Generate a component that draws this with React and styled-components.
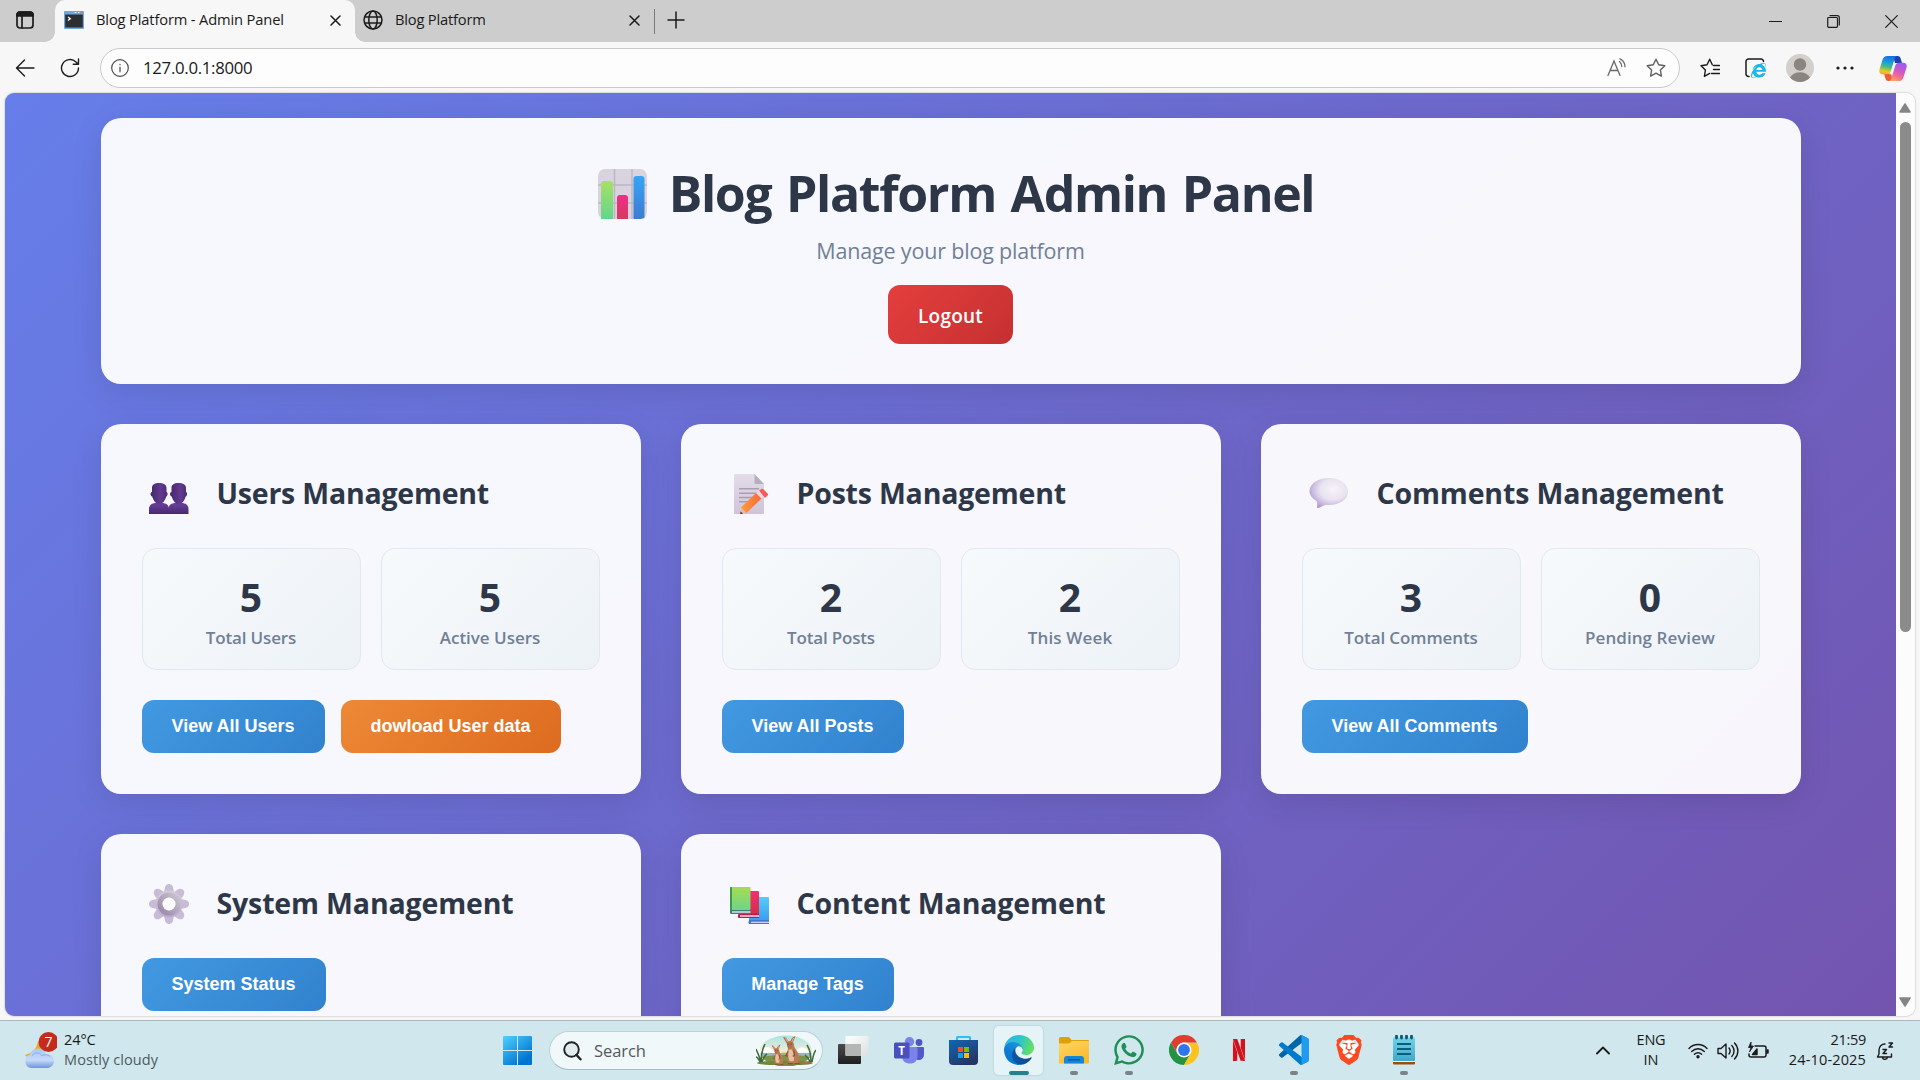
import React from "react";
import styled, { createGlobalStyle, css } from "styled-components";
import { FaWhatsapp, FaInternetExplorer } from "react-icons/fa";
import { SiBrave, SiNetflix } from "react-icons/si";

const Global = createGlobalStyle`
  * { box-sizing: border-box; }
  body { margin: 0; overflow: hidden; background: #f7f7f7; font-family: "Open Sans", "Noto Sans", sans-serif; }
  svg { display: block; flex: none; }
`;

const Screen = styled.div`
  width: 1920px;
  height: 1080px;
  display: flex;
  flex-direction: column;
  overflow: hidden;
  background: #f7f7f7;
`;

const Label = styled.span`
  white-space: nowrap;
  padding-bottom: 2px;
  font-size: ${(p) => p.$size || 15}px;
  font-weight: ${(p) => p.$weight || 400};
  letter-spacing: ${(p) => p.$ls || 0}px;
  word-spacing: ${(p) => p.$ws || 0}px;
  color: ${(p) => p.$color || "#1a1a1a"};
`;

/* ---------- browser chrome ---------- */

const TabStrip = styled.div`
  height: 42px;
  flex: none;
  display: flex;
  align-items: stretch;
  background: #cdcdcd;
`;

const StripButton = styled.div`
  width: ${(p) => p.$w}px;
  margin-right: ${(p) => p.$gap || 0}px;
  display: flex;
  align-items: center;
  justify-content: center;
  padding-bottom: 2px;
`;

const Tab = styled.div`
  position: relative;
  width: ${(p) => p.$w}px;
  display: flex;
  align-items: center;
  padding: 0 14px 2px ${(p) => (p.$active ? 9 : 8)}px;
  gap: 12px;
  border-radius: 10px 10px 0 0;
  ${(p) =>
    p.$active &&
    css`
      background: #f7f7f7;
      &::before,
      &::after {
        content: "";
        position: absolute;
        bottom: 0;
        width: 10px;
        height: 10px;
      }
      &::before {
        left: -10px;
        background: radial-gradient(circle at 0 0, transparent 9.5px, #f7f7f7 10px);
      }
      &::after {
        right: -10px;
        background: radial-gradient(circle at 100% 0, transparent 9.5px, #f7f7f7 10px);
      }
    `}
`;

const Grow = styled.div`
  flex: 1;
`;

const StripDivider = styled.div`
  width: 1px;
  height: 25px;
  margin: 9px 12px 0 0;
  background: #7a7a7a;
`;

const WindowButtons = styled.div`
  display: flex;
  align-items: center;
  gap: 45px;
  padding-right: 22px;
`;

const Toolbar = styled.div`
  height: 51px;
  flex: none;
  display: flex;
  align-items: center;
  padding: 1px 0 0 15px;
`;

const NavIcons = styled.div`
  display: flex;
  gap: 25px;
  width: 85px;
`;

const AddressBar = styled.div`
  width: 1580px;
  height: 40px;
  display: flex;
  align-items: center;
  gap: 14px;
  padding: 0 13px 0 10px;
  border: 1px solid #cacaca;
  border-radius: 20px;
  background: #fdfdfd;
`;

const AddressActions = styled.div`
  display: flex;
  gap: 19px;
`;

const ToolbarActions = styled.div`
  display: grid;
  grid-template-columns: repeat(4, 45px) 51px;
  align-items: center;
  justify-items: center;
  padding-left: 7.5px;
`;

const BrowserBody = styled.div`
  height: 928px;
  flex: none;
  padding: 0 5px 4px 5px;
  border-bottom: 1px solid #a9b8bc;
  background: #f7f7f7;
`;

const Frame = styled.div`
  display: flex;
  height: 923px;
  border-radius: 9px;
  overflow: hidden;
  box-shadow: 0 0 2px rgba(0, 0, 0, 0.35);
`;

/* ---------- page ---------- */

const Viewport = styled.div`
  flex: 1;
  overflow: hidden;
`;

const Page = styled.div`
  height: 1577px;
  padding-top: 25px;
  background: linear-gradient(135deg, #667eea 0%, #764ba2 100%);
`;

const Container = styled.div`
  width: 1700px;
  margin: 0 auto;
`;

const panel = css`
  background: rgba(255, 255, 255, 0.95);
  border-radius: 20px;
  box-shadow: 0 8px 32px rgba(0, 0, 0, 0.1);
`;

const Hero = styled.header`
  ${panel}
  height: 266px;
  margin-bottom: 40px;
  padding: 42px 40px 40px;
  display: flex;
  flex-direction: column;
  align-items: center;
`;

const HeroTitle = styled.h1`
  display: flex;
  align-items: center;
  gap: 21px;
  height: 68px;
  margin: 0;
  padding-left: 11px;
`;

const HeroSub = styled.p`
  margin: 7px 0 18px;
  height: 32px;
  display: flex;
  align-items: center;
`;

const button = css`
  display: inline-flex;
  align-items: center;
  justify-content: center;
  border: none;
  border-radius: 12px;
  color: #fff;
`;

const LogoutButton = styled.button`
  ${button}
  width: 125px;
  height: 59px;
  padding: 5px 0 0;
  font-family: inherit;
  background: linear-gradient(135deg, #e53e3e 0%, #c53030 100%);
`;

const Grid = styled.main`
  display: grid;
  grid-template-columns: repeat(3, 1fr);
  gap: 40px;
`;

const Card = styled.section`
  ${panel}
  height: 370px;
  padding: 41px;
`;

const CardTitle = styled.h2`
  display: flex;
  align-items: center;
  gap: 28px;
  height: 58px;
  margin: 0 0 25px;
  padding-left: 7px;
`;

const Stats = styled.div`
  display: grid;
  grid-template-columns: 1fr 1fr;
  gap: 20px;
  margin-bottom: 30px;
`;

const Stat = styled.div`
  height: 122px;
  display: flex;
  flex-direction: column;
  align-items: center;
  padding-top: 23px;
  border: 1px solid #e2e8f0;
  border-radius: 14px;
  background: linear-gradient(135deg, #f7fafc 0%, #edf2f7 100%);
`;

const StatNumber = styled.div`
  height: 50px;
  line-height: 50px;
  font-size: 39px;
  font-weight: 700;
  color: #2d3748;
`;

const StatLabel = styled.div`
  height: 30px;
  line-height: 30px;
  margin-top: 1px;
`;

const Actions = styled.div`
  display: flex;
  gap: 16px;
`;

const ActionButton = styled.button`
  ${button}
  width: ${(p) => p.$w}px;
  height: 53px;
  padding: 0;
  white-space: nowrap;
  font: 700 18px "Liberation Sans", Arial, sans-serif;
  background: ${(p) =>
    p.$tone === "orange"
      ? "linear-gradient(135deg, #ed8936 0%, #dd6b20 100%)"
      : "linear-gradient(135deg, #4299e1 0%, #3182ce 100%)"};
`;

const ScrollRail = styled.div`
  width: 19px;
  display: flex;
  flex-direction: column;
  align-items: center;
  padding: 10px 1px 9px 0;
  background: #fcfcfc;
`;

const ScrollThumb = styled.div`
  width: 11px;
  height: 510px;
  margin: 9px 0 auto;
  border-radius: 6px;
  background: #8b8b8b;
`;

/* ---------- taskbar ---------- */

const Taskbar = styled.footer`
  height: 59px;
  flex: none;
  display: flex;
  align-items: center;
  background: #cfe7ed;
`;

const Weather = styled.div`
  width: 486px;
  display: flex;
  align-items: center;
  gap: 7px;
  padding-left: 24px;
`;

const Stack = styled.div`
  display: flex;
  flex-direction: column;
  align-items: ${(p) => p.$align || "flex-start"};
  line-height: 18px;
`;

const SearchBox = styled.div`
  width: 274px;
  height: 39px;
  margin: 0 6px 0 0;
  display: flex;
  align-items: center;
  padding: 0 6px 0 13px;
  border: 1px solid #b9d3d9;
  border-bottom-color: #a3bcc3;
  border-radius: 20px;
  background: #f0f8fa;
`;

const SearchText = styled.div`
  flex: 1;
  padding: 0 0 0 12px;
`;

const AppSlot = styled.div`
  position: relative;
  width: ${(p) => p.$w || 49}px;
  height: 49px;
  margin-right: ${(p) => (p.$w ? 0 : 6)}px;
  display: flex;
  align-items: center;
  justify-content: center;
  padding-bottom: 1px;
  border-radius: 5px;
  ${(p) => p.$on && "background: #e6f3f7; box-shadow: 0 0 1px 1px rgba(150,180,190,.25);"}
  &::after {
    content: "";
    position: absolute;
    bottom: 0;
    width: ${(p) => (p.$on ? 20 : 8)}px;
    height: 4px;
    border-radius: 2px;
    background: ${(p) => (p.$on ? "#27808f" : p.$open ? "#778488" : "transparent")};
  }
`;

const BraveBadge = styled.div`
  background: radial-gradient(circle, #fff 9px, transparent 10px);
`;

const Tray = styled.div`
  margin-left: auto;
  display: flex;
  align-items: center;
  padding-right: 26px;
`;

const TrayStatus = styled.div`
  display: flex;
  align-items: center;
  gap: 8.5px;
  margin-left: 9px;
`;

const TrayCell = styled.div`
  display: flex;
  flex: none;
  justify-content: ${(p) => p.$justify || "center"};
  width: ${(p) => p.$w}px;
  margin-right: ${(p) => p.$gap || 0}px;
`;

/* ---------- chrome icons ---------- */

const Line = ({ w = 20, h, box, sw = 1.5, color = "#1b1b1b", children }) => (
  <svg width={w} height={h || w} viewBox={box || `0 0 ${w} ${h || w}`} fill="none" stroke={color} strokeWidth={sw} strokeLinecap="round" strokeLinejoin="round">
    {children}
  </svg>
);

const CloseX = () => (
  <Line w={11} sw={1.5}><path d="M1 1l9 9M10 1l-9 9" /></Line>
);

const SidebarIcon = () => (
  <Line w={18} sw={1.7}>
    <rect x="1" y="1" width="16" height="16" rx="3" />
    <path d="M1 3.5a2.5 2.5 0 0 1 2.5-2.5h11A2.5 2.5 0 0 1 17 3.500V5H1z" fill="#1b1b1b" />
    <path d="M6 5v12" />
  </Line>
);

const TerminalIcon = () => (
  <svg width="20" height="18" viewBox="0 0 20 18">
    <rect width="20" height="18" rx="1" fill="#6da7e0" />
    <path d="M10.500 1.500h2M14 1.500h1.500" stroke="#e8f2fb" />
    <path d="M16.500 1.500h2" stroke="#e06a5a" strokeWidth="1.400" />
    <rect x="1.200" y="3.500" width="17.600" height="13" fill="#2c2e31" />
    <path d="M4 6l2.300 1.700L4 9.500" stroke="#fff" strokeWidth="1.300" fill="none" />
  </svg>
);

const GlobeIcon = () => (
  <Line w={20} sw={1.5}>
    <circle cx="10" cy="10" r="9" />
    <ellipse cx="10" cy="10" rx="4.200" ry="9" />
    <path d="M2 7h16M2 13h16" />
  </Line>
);

const ReadAloud = () => (
  <svg width="20" height="20" viewBox="0 0 20 20" fill="none" stroke="#6a6a6a" strokeWidth="1.300" strokeLinecap="round">
    <path d="M1 17.500L7 3l6 14.500M3 12.500h8" />
    <path d="M12.500 3.500c1.500 1.200 2.200 2.900 2.300 5M13 .8c3.300 1.700 5 4.500 5 8" />
  </svg>
);

const starPath = "M10 1.200l2.700 5.600 6.100.9-4.400 4.300 1 6.100L10 15.200l-5.400 2.900 1-6.100L1.200 7.700l6.100-.9z";

const FavoritesIcon = () => (
  <Line sw={1.4}>
    <path d="M12.300 6.800L9.700 1.200 7 6.800l-6 .9L5.400 12l-1 6.300 5.300-2.900" />
    <path d="M13.500 7.500h6M13.500 11.500h6M11.500 15.500h8" />
  </Line>
);

const IeSlot = styled.div`
  position: relative;
  width: 20px;
  height: 20px;
`;
const IeBadge = styled.div`
  position: absolute;
  right: -1px;
  bottom: 0;
  background: #f7f7f7;
  border-radius: 8px;
`;

const CopilotIcon = () => (
  <svg width="28" height="27" viewBox="0 0 28 27">
    <defs>
      <linearGradient id="cpA" x1="0.500" y1="0" x2="0.300" y2="1">
        <stop offset="0" stopColor="#1a6fe0" /><stop offset=".35" stopColor="#1b9fdc" /><stop offset=".6" stopColor="#4cc07a" /><stop offset=".85" stopColor="#f2c61f" /><stop offset="1" stopColor="#f5a623" />
      </linearGradient>
      <linearGradient id="cpB" x1="0.700" y1="0" x2="0.300" y2="1">
        <stop offset="0" stopColor="#9a5cf2" /><stop offset=".45" stopColor="#d158c8" /><stop offset=".75" stopColor="#f6708a" /><stop offset="1" stopColor="#ffa45c" />
      </linearGradient>
    </defs>
    <path d="M14 1h4.600c1.500 0 2.400.8 2.900 2.200L23 8h-7z" fill="#1b3fb5" />
    <path d="M14 26H9.400c-1.500 0-2.400-.8-2.900-2.200L5 18.500h7z" fill="#ee5a3a" />
    <path d="M8.500 1H18c-1.300.4-2 1.500-2.500 3l-3.600 12c-.7 2.200-1.800 3.200-4 3.200H3.500C.9 19.200-.2 17.200.5 14.500L3.600 4.600C4.400 2.200 5.800 1 8.500 1z" fill="url(#cpA)" />
    <path d="M19.500 26H10c1.300-.4 2-1.500 2.500-3l3.600-12c.7-2.200 1.800-3.200 4-3.200h4.400c2.600 0 3.700 2 3 4.700l-3.100 9.900c-.8 2.400-2.200 3.600-4.900 3.600z" fill="url(#cpB)" />
    <path d="M18.700 7.900c-1.800.2-2.600 1.400-3.200 3.200L13 19.200H10c1.400-.5 2-1.600 2.500-3.200L15 7.900z" fill="#fdfaff" />
  </svg>
);

/* ---------- page pictograms ---------- */

const ChartEmoji = () => (
  <svg width="50" height="50" viewBox="0 0 50 50">
    <defs>
      <linearGradient id="chG" x2="0" y2="1"><stop stopColor="#a8e063" /><stop offset="1" stopColor="#62d68c" /></linearGradient>
      <linearGradient id="chB" x2="0" y2="1"><stop stopColor="#36a5f5" /><stop offset="1" stopColor="#3d7bd0" /></linearGradient>
      <linearGradient id="chR" x2="0" y2="1"><stop stopColor="#ee2f86" /><stop offset="1" stopColor="#d63a5f" /></linearGradient>
    </defs>
    <rect width="49" height="50" rx="7" fill="#d9d3df" />
    <path d="M16.500 0v50M34 0v50M0 16h49M0 34h49" stroke="#bcb6c4" strokeWidth="1.500" />
    <path d="M3 50V15c0-2 1-3 3-3h6c2 0 3 1 3 3v35H6z" fill="url(#chG)" />
    <path d="M19 50V29c0-2 1-3 3-3h5c2 0 3 1 3 3v21z" fill="url(#chR)" />
    <path d="M35.500 50V10c0-2 1-3 3-3h5c2 0 3 1 3 3v39l-4 1z" fill="url(#chB)" />
  </svg>
);

const UsersEmoji = () => (
  <svg width="40" height="40" viewBox="0 0 40 40">
    <defs>
      <linearGradient id="usA" x2="1" y2="0"><stop stopColor="#44276b" /><stop offset=".6" stopColor="#623a90" /><stop offset="1" stopColor="#4b2b73" /></linearGradient>
      <linearGradient id="usB" x2="0" y2="1"><stop stopColor="#6a409c" /><stop offset="1" stopColor="#472a70" /></linearGradient>
    </defs>
    {[0, 19.5].map((x) => (
      <g key={x} transform={`translate(${x} 0)`}>
        <path d="M0 40v-5c0-4 3-6 7-6h6c4 0 7 2 7 6v5z" fill="url(#usB)" />
        <path d="M3 14c0-3.500 2.500-5 7-5s7.500 1.500 7.500 5v4c1.500 0 1.600 4-.3 4.500C16 27 13.500 30 10.300 30 7 30 4.500 27 3.200 22.500 1 22 1 18 3 18z" fill="url(#usA)" />
      </g>
    ))}
  </svg>
);

const MemoEmoji = () => (
  <svg width="40" height="40" viewBox="0 0 40 40">
    <defs>
      <linearGradient id="meA" x2="0" y2="1"><stop stopColor="#e3dde9" /><stop offset="1" stopColor="#cfc3d9" /></linearGradient>
      <linearGradient id="meB" x2="1" y2="0"><stop stopColor="#ff9a3d" /><stop offset="1" stopColor="#f8693c" /></linearGradient>
    </defs>
    <path d="M5 1a1 1 0 0 1 1-1h19l10 10v29a1 1 0 0 1-1 1H6a1 1 0 0 1-1-1z" fill="url(#meA)" />
    <path d="M25.500 0L35 10h-8.500a1 1 0 0 1-1-1z" fill="#b7afc0" />
    <path d="M10 14.700h20M10 19.200h19M10 23.500h15M10 27.700h11" stroke="#a79fb1" strokeWidth="1.400" />
    <path d="M12 33.500L28 18l5.500 5.500L17.500 39z" fill="url(#meB)" />
    <path d="M27 19l3-2.800 5.700 5.600-3 2.900z" fill="#e4dcea" />
    <path d="M30 16.500l2.500-1.600c.7-.4 1.300-.2 1.800.3l4.300 4.300c.5.500.6 1.200.2 1.800L36 24z" fill="#fb5a52" />
    <path d="M12 33.500L17.500 39 12 40z" fill="#e9b99a" />
    <path d="M11.500 37.500l2.500 2.200-2.700.3z" fill="#3a2a35" />
  </svg>
);

const BubbleEmoji = () => (
  <svg width="40" height="40" viewBox="0 0 40 40">
    <defs>
      <radialGradient id="buA" cx=".62" cy=".38" r=".7"><stop stopColor="#f6f3f8" /><stop offset=".5" stopColor="#e9e2f0" /><stop offset=".75" stopColor="#cdbfe2" /><stop offset="1" stopColor="#a995cb" /></radialGradient>
    </defs>
    <path d="M20 4c11 0 19 5.600 19 13.500S31 31 20 31c-1 0-2.500 0-3.500-.2C14.500 31.500 11 34 9 34c-1.300 0-1-1-.8-2 .3-2 .3-3.500-.7-5C3.500 24.500.5 21 .5 17.500.5 9.600 9 4 20 4z" fill="url(#buA)" />
  </svg>
);

const GearEmoji = () => (
  <svg width="40" height="40" viewBox="0 0 40 40">
    <defs>
      <linearGradient id="geA" x2="0" y2="1"><stop stopColor="#d3cddb" /><stop offset="1" stopColor="#bda9d2" /></linearGradient>
      <linearGradient id="geB" x1="0" y1="1" x2="1" y2="0"><stop stopColor="#9a88a8" /><stop offset="1" stopColor="#c9c4cf" /></linearGradient>
    </defs>
    {[0, 45, 90, 135, 180, 225, 270, 315].map((a) => (
      <path key={a} transform={`rotate(${a} 20 20)`} d="M14.500 11l1.500-7.500c.5-2.300 2-3.500 4-3.500s3.500 1.200 4 3.500L25.500 11z" fill="#c8bbd6" />
    ))}
    <circle cx="20" cy="20" r="13.500" fill="url(#geA)" />
    <circle cx="20" cy="20" r="9" fill="none" stroke="url(#geB)" strokeWidth="5" />
    <circle cx="20" cy="20" r="6.500" fill="#fbfaff" />
  </svg>
);

const BooksEmoji = () => (
  <svg width="40" height="40" viewBox="0 0 40 40">
    <defs>
      <linearGradient id="boA" x2="0" y2="1"><stop stopColor="#a5dc50" /><stop offset="1" stopColor="#6fd48a" /></linearGradient>
      <linearGradient id="boB" x2="0" y2="1"><stop stopColor="#55cdf6" /><stop offset="1" stopColor="#3a9cf0" /></linearGradient>
      <linearGradient id="boC" x2="0" y2="1"><stop stopColor="#ee3175" /><stop offset="1" stopColor="#d92b45" /></linearGradient>
    </defs>
    <rect x="20" y="13" width="20" height="24" rx="1" fill="url(#boB)" />
    <path d="M20 36h20v4H21a1.500 1.500 0 0 1-1.500-2z" fill="#4776d0" />
    <path d="M22 38.300h18" stroke="#cdd3f2" strokeWidth="1.300" />
    <rect x="9.500" y="7" width="20.500" height="24" rx="1" fill="url(#boC)" />
    <path d="M9.500 29.500H30V34H10.500a1.500 1.500 0 0 1-1.500-2z" fill="#b81f4b" />
    <path d="M11 32h19" stroke="#e6c9dc" strokeWidth="1.700" />
    <rect x="1" y="3" width="20.500" height="23" rx="1" fill="url(#boA)" />
    <path d="M1 4a1 1 0 0 1 1-1h1v26H1.700L1 28z" fill="#3c9a48" />
    <path d="M1 26h20.500v4H2.500A1.500 1.500 0 0 1 1 28.500z" fill="#3f7f74" />
    <path d="M3 28h18.500" stroke="#c6d8e6" strokeWidth="1.700" />
  </svg>
);

/* ---------- taskbar icons ---------- */

const WeatherIcon = () => (
  <svg width="33" height="38" viewBox="0 0 33 38">
    <defs><linearGradient id="weA" x2="0" y2="1"><stop stopColor="#a9c8f3" /><stop offset=".6" stopColor="#c5daf8" /><stop offset="1" stopColor="#6f93de" /></linearGradient></defs>
    <path d="M14 9c-1 7-5 12-13 14 3 4 8 5 12 3 5-2 7-9 1-17z" fill="#f2a52c" />
    <path d="M7 36a7 7 0 0 1-1-13.500A8.500 8.500 0 0 1 22 22a7 7 0 0 1 2 14z" fill="url(#weA)" />
    <path d="M8 24c2-4 8-4 10 0 2-2 6-1.500 8 .5" fill="none" stroke="#8daee6" strokeWidth="1" />
    <circle cx="24.500" cy="10" r="10" fill="#c42b1c" />
    <text x="24.500" y="15" textAnchor="middle" fontSize="14" fill="#fff" fontFamily="Open Sans">7</text>
  </svg>
);

const StartIcon = () => (
  <svg width="29" height="29" viewBox="0 0 29 29">
    <defs>
      <linearGradient id="stB" gradientUnits="userSpaceOnUse" x1="0" y1="0" x2="20" y2="26"><stop stopColor="#50d2fd" /><stop offset="1" stopColor="#0074d2" /></linearGradient>
    </defs>
    <path d="M1 0h13v14H0V1a1 1 0 0 1 1-1zM15 0h13a1 1 0 0 1 1 1v13H15zM0 15h14v14H1a1 1 0 0 1-1-1zM15 15h14v13a1 1 0 0 1-1 1H15z" fill="url(#stB)" />
  </svg>
);

const MagnifierIcon = () => (
  <svg width="19" height="20" viewBox="0 0 19 20" fill="none" stroke="#222" strokeLinecap="round">
    <circle cx="8.500" cy="8.500" r="7.300" strokeWidth="1.900" fill="#e2ebed" />
    <path d="M13.500 14l4 4.300" strokeWidth="2.400" />
  </svg>
);

const Kangaroo = ({ x, y, s }) => (
  <g transform={`translate(${x} ${y}) scale(${s})`}>
    <path d="M8 25c5 3 12 4 19 2" stroke="#a8704a" strokeWidth="1.800" fill="none" />
    <path d="M5 8c1 3 0 5-.5 8C3 22 4 27 7 28h8c3-3 2-9-1-13-2-3-3-5-3-8z" fill="#b87b52" />
    <path d="M6 14c-1 5-1 9 1 12h4c1-4 0-9-2-12z" fill="#e6c3a0" />
    <path d="M4 8L0 1c3 0 4.500 2 5.500 4.500h2C8.500 3 10 .5 13 0l-3.200 7.500C10 11 8 13 6.500 13S4 11 4 8z" fill="#b06f48" />
    <path d="M2.500 2.500L5 6M11 2L9 6" stroke="#f0cdb0" strokeWidth=".8" />
    <path d="M5 8.500h.6M8 8.500h.6" stroke="#2d1a10" strokeWidth="1" />
    <path d="M5 16l-2 4 2 1M11 15l1 5-2 1M5 28.500h5M12 28.500h5" stroke="#8a5232" strokeWidth="1.300" fill="none" />
  </g>
);

const SceneIcon = () => (
  <svg width="60" height="31" viewBox="0 0 60 31">
    <defs><clipPath id="scC"><ellipse cx="30" cy="16" rx="26" ry="15.500" /></clipPath>
      <linearGradient id="scG" x2="0" y2="1"><stop stopColor="#a9e3e0" /><stop offset=".6" stopColor="#f5efe0" /></linearGradient></defs>
    <g clipPath="url(#scC)">
      <rect width="60" height="31" fill="url(#scG)" />
      <path d="M4 17c3-6 8-7 12-2l3 3zM40 18c1-6 8-8 14-1z" fill="#fff" />
      <circle cx="28" cy="20" r="3.500" fill="#fbd66b" />
      <path d="M2 18h56v5H2z" fill="#7ea6b8" opacity=".8" />
      <path d="M0 23c16-4 44-4 60 0v9H0z" fill="#7c9447" />
    </g>
    <ellipse cx="29" cy="28" rx="28" ry="2.300" fill="#71863c" />
    <path d="M5 27C3 20 1 16 0 14M5 27c0-8 2-14 4-18M4 27c-2-4-3-5-4-5M6 27c2-6 3-7 5-8M55 27c0-8-2-14-4-17M56 27c1-6 2-10 4-12M54 27c-2-5-4-6-5-7" stroke="#3f6b35" strokeWidth="1.500" fill="none" />
    <Kangaroo x={15.500} y={9.500} s={0.7} />
    <Kangaroo x={27} y={1} s={0.97} />
  </svg>
);

const TaskViewIcon = () => (
  <svg width="31" height="29" viewBox="0 0 31 29">
    <defs><linearGradient id="tvA" x2="0" y2="1"><stop stopColor="#4b4b4b" /><stop offset="1" stopColor="#1f1f1f" /></linearGradient>
      <linearGradient id="tvB" x2="1" y2="1"><stop stopColor="#fff" /><stop offset="1" stopColor="#dcdfe0" /></linearGradient></defs>
    <rect x="0" y="8" width="23" height="20" rx="1" fill="url(#tvA)" />
    <rect x="7.500" y="0" width="23" height="20" rx="1" fill="url(#tvB)" />
    <path d="M7.500 8H23v12H8.500a1 1 0 0 1-1-1z" fill="#b5b5b5" />
  </svg>
);

const TeamsIcon = () => (
  <svg width="30" height="27" viewBox="0 0 30 27">
    <circle cx="25" cy="5.500" r="3.400" fill="#4f55c4" />
    <path d="M20 10h9a1 1 0 0 1 1 1v6c0 4-2.500 6-5.500 6S20 21 20 18z" fill="#5059c9" />
    <circle cx="15.500" cy="4.700" r="4.700" fill="#7b83eb" />
    <path d="M8 10h14.500a1 1 0 0 1 1 1v8c0 5-3 7.500-7.500 7.500S8 24 8 19z" fill="#7b83eb" />
    <rect x="0" y="5.500" width="15.500" height="16" rx="1.500" fill="#4a50bb" />
    <text x="7.700" y="17.600" textAnchor="middle" fontSize="11.500" fontWeight="700" fill="#fff" fontFamily="Open Sans">T</text>
  </svg>
);

const StoreIcon = () => (
  <svg width="29" height="29" viewBox="0 0 29 29">
    <defs><linearGradient id="soA" x2=".6" y2="1"><stop stopColor="#0f68b5" /><stop offset="1" stopColor="#253562" /></linearGradient></defs>
    <path d="M8 5V1.500A.5.500 0 0 1 8.500 1h12a.5.500 0 0 1 .5.500V5" fill="none" stroke="#28c1f5" strokeWidth="2" />
    <path d="M0 4h29v21a4 4 0 0 1-4 4H4a4 4 0 0 1-4-4z" fill="url(#soA)" />
    <rect x="9" y="11" width="5" height="5" fill="#f25022" /><rect x="15" y="11" width="5" height="5" fill="#7fba00" />
    <rect x="9" y="17" width="5" height="5" fill="#00a4ef" /><rect x="15" y="17" width="5" height="5" fill="#ffb900" />
  </svg>
);

const EdgeIcon = () => (
  <svg width="30" height="30" viewBox="0 0 256 256">
    <defs>
      <linearGradient id="edA" x1="0" x2="1"><stop stopColor="#0c59a4" /><stop offset="1" stopColor="#114a8b" /></linearGradient>
      <linearGradient id="edB" x1=".8" y1="0" x2=".3" y2="1"><stop stopColor="#1b9de2" /><stop offset=".6" stopColor="#0e7ad2" /><stop offset="1" stopColor="#0078d4" /></linearGradient>
      <linearGradient id="edC" x1="0" y1=".3" x2="1" y2=".6"><stop stopColor="#2fb5e4" /><stop offset=".45" stopColor="#2cc3cf" /><stop offset="1" stopColor="#67e15a" /></linearGradient>
    </defs>
    <path fill="url(#edA)" d="M231 190.500c-3.400 1.800-6.900 3.400-10.500 4.700a101.500 101.500 0 0 1-35.900 6.400c-47.300 0-88.500-32.500-88.500-74.300a31.500 31.500 0 0 1 16.400-27.300c-42.800 1.800-53.800 46.400-53.800 72.500 0 74 68.100 81.400 82.800 81.400 7.900 0 19.800-2.300 27-4.600l1.300-.4a128.300 128.300 0 0 0 66.600-52.800 4 4 0 0 0-5.400-5.600z" />
    <path fill="url(#edB)" d="M105.700 241.400a79.200 79.200 0 0 1-22.700-21.300 80.700 80.700 0 0 1 29.500-120c3.200-1.500 8.500-4.100 15.600-4a32.400 32.400 0 0 1 25.700 13 31.900 31.900 0 0 1 6.300 18.700c0-.2 24.500-79.600-80-79.600-43.900 0-80 41.700-80 78.200a130.200 130.200 0 0 0 12.100 56 128 128 0 0 0 156.400 67 75.500 75.500 0 0 1-62.800-8z" />
    <path fill="url(#edC)" d="M152.300 148.900c-.9 1-3.400 2.500-3.400 5.600 0 2.600 1.700 5.200 4.800 7.300 14.300 10 41.400 8.600 41.500 8.600a59.600 59.600 0 0 0 30.300-8.300 61.400 61.400 0 0 0 30.400-52.900c.3-22.400-8-37.300-11.300-43.900C223.500 23.900 177.700 0 128 0A128 128 0 0 0 0 126.200c.5-36.500 36.800-66 80-66 3.500 0 23.500.3 42 10a72.600 72.600 0 0 1 30.900 29.300c6.100 10.600 7.200 24.100 7.200 29.500s-2.700 13.300-7.800 19.900z" />
  </svg>
);

const FolderIcon = () => (
  <svg width="30" height="27" viewBox="0 0 30 27">
    <defs><linearGradient id="foA" x2=".6" y2="1"><stop stopColor="#ffd766" /><stop offset="1" stopColor="#fbb92c" /></linearGradient></defs>
    <path d="M0 1.500A1.500 1.500 0 0 1 1.500 0h8.500l2.500 3H29a1 1 0 0 1 1 1v5H0z" fill="#e0a106" />
    <path d="M0 6.500h10L13 4h16a1 1 0 0 1 1 1v20.500a1 1 0 0 1-1 1H1a1 1 0 0 1-1-1z" fill="url(#foA)" />
    <path d="M5 26.500V22a3 3 0 0 1 3-3h14a3 3 0 0 1 3 3v4.500z" fill="#1585d8" />
    <path d="M9 22.800h12" stroke="#0b4f95" strokeWidth="1.200" />
  </svg>
);

const ChromeIcon = () => (
  <svg width="30" height="30" viewBox="0 0 48 48">
    <path d="M24 24l10.400 6L24 48A24 24 0 0 1 3.200 12l10.400 18z" fill="#229342" />
    <path d="M24 12h20.800A24 24 0 0 1 24 48l10.400-18z" fill="#fcc31e" />
    <path d="M3.200 12A24 24 0 0 1 44.800 12H24a12 12 0 0 0-10.400 18z" fill="#e33b2e" />
    <circle cx="24" cy="24" r="12" fill="#fff" />
    <circle cx="24" cy="24" r="9.500" fill="#2e76ee" />
  </svg>
);

const VsCodeIcon = () => (
  <svg width="30" height="30" viewBox="0 0 100 100">
    <path d="M96.500 10.800L75.900.9a6.200 6.200 0 0 0-7.100 1.200L1.300 63.600a4.200 4.200 0 0 0 0 6.200l5.500 5a4.200 4.200 0 0 0 5.300.2L93.400 13.400c2.700-2.100 6.600-.1 6.600 3.300v-.3a6.300 6.300 0 0 0-3.500-5.600z" fill="#0065a9" />
    <path d="M96.500 89.200l-20.600 9.900a6.200 6.200 0 0 1-7.100-1.200L1.300 36.400a4.200 4.200 0 0 1 0-6.200l5.500-5a4.200 4.200 0 0 1 5.300-.2l81.300 61.600c2.700 2.100 6.600.1 6.600-3.300v.3a6.300 6.300 0 0 1-3.500 5.600z" fill="#007acc" />
    <path d="M75.900 99.100a6.200 6.200 0 0 1-7.100-1.200c2.300 2.300 6.200.7 6.200-2.600V4.700c0-3.300-3.900-4.900-6.200-2.600A6.200 6.200 0 0 1 75.900.9l20.600 9.900A6.300 6.300 0 0 1 100 16.400v67.200a6.300 6.300 0 0 1-3.500 5.600z" fill="#1f9cf0" />
  </svg>
);

const NotepadIcon = () => (
  <svg width="22" height="30" viewBox="0 0 22 30">
    <defs><linearGradient id="noA" x2="0" y2="1"><stop stopColor="#71d3ea" /><stop offset="1" stopColor="#3fa9c9" /></linearGradient></defs>
    <path d="M0 26h22v2.500a1 1 0 0 1-1 1H1a1 1 0 0 1-1-1z" fill="#9b4f0f" />
    <rect y="24" width="22" height="3" fill="#f3f3f3" />
    <rect y="2.500" width="22" height="23.500" rx="1" fill="url(#noA)" />
    <path d="M4 9h14M4 14h14M4 19h14" stroke="#0c5f7c" strokeWidth="1.800" />
    <path d="M3.500 1v2M8.500 1v2M13.500 1v2M18.500 1v2" stroke="#10586f" strokeWidth="2.800" strokeLinecap="round" />
  </svg>
);

/* ---------- data ---------- */

const CARDS = [
  {
    title: "Users Management",
    ls: -0.22,
    icon: <UsersEmoji />,
    stats: [{ n: "5", label: "Total Users", ls: -0.16 }, { n: "5", label: "Active Users", ls: -0.02 }],
    actions: [{ label: "View All Users", w: 183 }, { label: "dowload User data", w: 220, tone: "orange" }],
  },
  {
    title: "Posts Management",
    ls: -0.2,
    icon: <MemoEmoji />,
    stats: [{ n: "2", label: "Total Posts", ls: -0.17 }, { n: "2", label: "This Week", ls: 0.15 }],
    actions: [{ label: "View All Posts", w: 182 }],
  },
  {
    title: "Comments Management",
    ls: -0.15,
    icon: <BubbleEmoji />,
    stats: [{ n: "3", label: "Total Comments", ls: -0.1 }, { n: "0", label: "Pending Review", ls: 0.05 }],
    actions: [{ label: "View All Comments", w: 226 }],
  },
  { title: "System Management", ls: -0.15, icon: <GearEmoji />, actions: [{ label: "System Status", w: 184 }] },
  { title: "Content Management", ls: -0.12, icon: <BooksEmoji />, actions: [{ label: "Manage Tags", w: 172 }] },
];

const APPS = [
  { name: "task-view", icon: <TaskViewIcon /> },
  { name: "teams", icon: <TeamsIcon /> },
  { name: "store", icon: <StoreIcon /> },
  { name: "edge", icon: <EdgeIcon />, on: true },
  { name: "explorer", icon: <FolderIcon />, open: true },
  { name: "whatsapp", icon: <FaWhatsapp size={34} color="#1d8f57" />, open: true },
  { name: "chrome", icon: <ChromeIcon /> },
  { name: "netflix", icon: <SiNetflix size={22} color="#d4121b" /> },
  { name: "vscode", icon: <VsCodeIcon />, open: true },
  { name: "brave", icon: <BraveBadge><SiBrave size={30} color="#fb4a1f" /></BraveBadge> },
  { name: "notepad", icon: <NotepadIcon />, open: true },
];

export default function App() {
  return (
    <Screen>
      <Global />
      <TabStrip>
        <StripButton $w={50} $gap={5}><SidebarIcon /></StripButton>
        <Tab $active $w={300}>
          <TerminalIcon />
          <Label $size={14.7} $ls={-0.15}>Blog Platform - Admin Panel</Label>
          <Grow />
          <CloseX />
        </Tab>
        <Tab $w={299}>
          <GlobeIcon />
          <Label $size={14.7} $ls={-0.19}>Blog Platform</Label>
          <Grow />
          <CloseX />
        </Tab>
        <StripDivider />
        <StripButton $w={18}><Line w={18}><path d="M1 9h16M9 1v16" /></Line></StripButton>
        <Grow />
        <WindowButtons>
          <Line w={13} sw={1.2}><path d="M0 6.500h13" /></Line>
          <Line w={13} sw={1.2}><rect x=".7" y="2.500" width="9.800" height="9.800" rx="1" /><path d="M3 .7h7.300a2 2 0 0 1 2 2V10" /></Line>
          <Line w={13} sw={1.2}><path d="M.7.700l11.600 11.600M12.300.700L.7 12.300" /></Line>
        </WindowButtons>
      </TabStrip>

      <Toolbar>
        <NavIcons>
          <Line sw={1.4}><path d="M19 10H1.500M9.500 2l-8 8 8 8" /></Line>
          <Line sw={1.4}><path d="M18.500 10A8.500 8.500 0 1 1 16 4l2 2M18.500 1v5.200h-5.200" /></Line>
        </NavIcons>
        <AddressBar>
          <Line w={18} sw={1.2} color="#4a4a4a"><circle cx="9" cy="9" r="8.300" /><path d="M9 8.200v4.600M9 5.400v.3" /></Line>
          <Label $size={16.8} $ls={-0.3}>127.0.0.1:8000</Label>
          <Grow />
          <AddressActions>
            <ReadAloud />
            <Line sw={1.4} color="#5f5f5f"><path d={starPath} /></Line>
          </AddressActions>
        </AddressBar>
        <ToolbarActions>
          <FavoritesIcon />
          <IeSlot>
            <Line sw={1.5}><path d="M4 18.500H3.500A2.500 2.500 0 0 1 1 16V3.500A2.500 2.500 0 0 1 3.500 1H16a2.500 2.500 0 0 1 2.500 2.500" /></Line>
            <IeBadge><FaInternetExplorer size={15} color="#1fb5ea" /></IeBadge>
          </IeSlot>
          <svg width="28" height="28" viewBox="0 0 28 28">
            <circle cx="14" cy="14" r="14" fill="#d3d0cc" />
            <circle cx="14" cy="10.500" r="6.200" fill="#8b8582" />
            <path d="M4 23.500c2-3.600 6-5.300 10-5.300s8 1.700 10 5.300A14 14 0 0 1 14 28a14 14 0 0 1-10-4.500z" fill="#8b8582" />
          </svg>
          <svg width="18" height="4" viewBox="0 0 18 4" fill="#1b1b1b"><circle cx="2" cy="2" r="1.600" /><circle cx="9" cy="2" r="1.600" /><circle cx="16" cy="2" r="1.600" /></svg>
          <CopilotIcon />
        </ToolbarActions>
      </Toolbar>

      <BrowserBody>
        <Frame>
          <Viewport>
            <Page>
              <Container>
                <Hero>
                  <HeroTitle>
                    <ChartEmoji />
                    <Label $size={50} $weight={700} $color="#2d3748" $ls={-1.35} $ws={3}>Blog Platform Admin Panel</Label>
                  </HeroTitle>
                  <HeroSub><Label $size={21.5} $color="#718096" $ls={-0.18}>Manage your blog platform</Label></HeroSub>
                  <LogoutButton><Label $size={19} $weight={600} $color="#fff" $ls={0.2}>Logout</Label></LogoutButton>
                </Hero>
                <Grid>
                  {CARDS.map((c) => (
                    <Card key={c.title}>
                      <CardTitle>
                        {c.icon}
                        <Label $size={28.5} $weight={700} $color="#2d3748" $ls={c.ls}>{c.title}</Label>
                      </CardTitle>
                      {c.stats && (
                        <Stats>
                          {c.stats.map((s) => (
                            <Stat key={s.label}>
                              <StatNumber>{s.n}</StatNumber>
                              <StatLabel><Label $size={17} $weight={600} $color="#718096" $ls={s.ls}>{s.label}</Label></StatLabel>
                            </Stat>
                          ))}
                        </Stats>
                      )}
                      <Actions>
                        {c.actions.map((a) => (
                          <ActionButton key={a.label} $w={a.w} $tone={a.tone}>{a.label}</ActionButton>
                        ))}
                      </Actions>
                    </Card>
                  ))}
                </Grid>
              </Container>
            </Page>
          </Viewport>
          <ScrollRail>
            <svg width="12" height="10" viewBox="0 0 12 10"><path d="M6 1l5 8H1z" fill="#858585" stroke="#858585" strokeWidth="1.500" strokeLinejoin="round" /></svg>
            <ScrollThumb />
            <svg width="12" height="10" viewBox="0 0 12 10"><path d="M6 9l5-8H1z" fill="#858585" stroke="#858585" strokeWidth="1.500" strokeLinejoin="round" /></svg>
          </ScrollRail>
        </Frame>
      </BrowserBody>

      <Taskbar>
        <Weather>
          <WeatherIcon />
          <Stack>
            <Label $size={14.5} $ls={-0.1}>24°C</Label>
            <Label $size={14.5} $color="#4d5b60" $ls={0.1}>Mostly cloudy</Label>
          </Stack>
        </Weather>
        <AppSlot $w={63}><StartIcon /></AppSlot>
        <SearchBox>
          <MagnifierIcon />
          <SearchText><Label $size={16.5} $color="#54595b" $ls={-0.08}>Search</Label></SearchText>
          <SceneIcon />
        </SearchBox>
        {APPS.map((a) => (
          <AppSlot key={a.name} $on={a.on} $open={a.open}>{a.icon}</AppSlot>
        ))}
        <Tray>
          <TrayCell $w={41}><Line w={14} h={9} sw={1.8}><path d="M1 7.500l6-6 6 6" /></Line></TrayCell>
          <TrayCell $w={56}>
            <Stack $align="center"><Label $size={14.5} $ls={-0.2}>ENG</Label><Label $size={14.5}>IN</Label></Stack>
          </TrayCell>
          <TrayStatus>
            <Line w={20} h={16} sw={1.4}><path d="M1 5.500c5-5.300 13-5.300 18 0M3.700 8.500c3.600-3.700 9-3.700 12.600 0M6.400 11.300c2-2 5.200-2 7.200 0" /><circle cx="10" cy="13.800" r="1" fill="#1b1b1b" /></Line>
            <Line w={22} h={18} sw={1.4}><path d="M1 6.500h3l5-4.500v14l-5-4.500H1z" /><path d="M12 6c1.300 1.700 1.300 4.300 0 6M14.800 3.500c3 3 3 8 0 11M17.500 1c4.500 4.500 4.500 11.500 0 16" /></Line>
            <Line w={22} h={18} sw={1.5}><path d="M8 4h9a2 2 0 0 1 2 2v7a2 2 0 0 1-2 2H4a2 2 0 0 1-2-2v-1" /><path d="M20 8v3h1V8z" /><path d="M10 7v5.500H5.500z" fill="#1b1b1b" /><path d="M4 0L1.500 5.500H4L2.500 10l4-6H4.200z" fill="#1b1b1b" strokeWidth=".8" /></Line>
          </TrayStatus>
          <TrayCell $w={97} $justify="flex-end" $gap={10}>
            <Stack $align="flex-end"><Label $size={14.5} $ls={-0.3}>21:59</Label><Label $size={14.5} $ls={0.15}>24-10-2025</Label></Stack>
          </TrayCell>
          <Line w={18} h={18} sw={1.4}><path d="M9 2C5.500 2 3 4.500 3 8v4l-1.500 3h14V12M6.500 15.500c.5 2.500 4 2.500 5 0" /><path d="M7 7.500h3.500L7 11.500h3.500M13 1h3.500L13 5h3.500" /></Line>
        </Tray>
      </Taskbar>
    </Screen>
  );
}
